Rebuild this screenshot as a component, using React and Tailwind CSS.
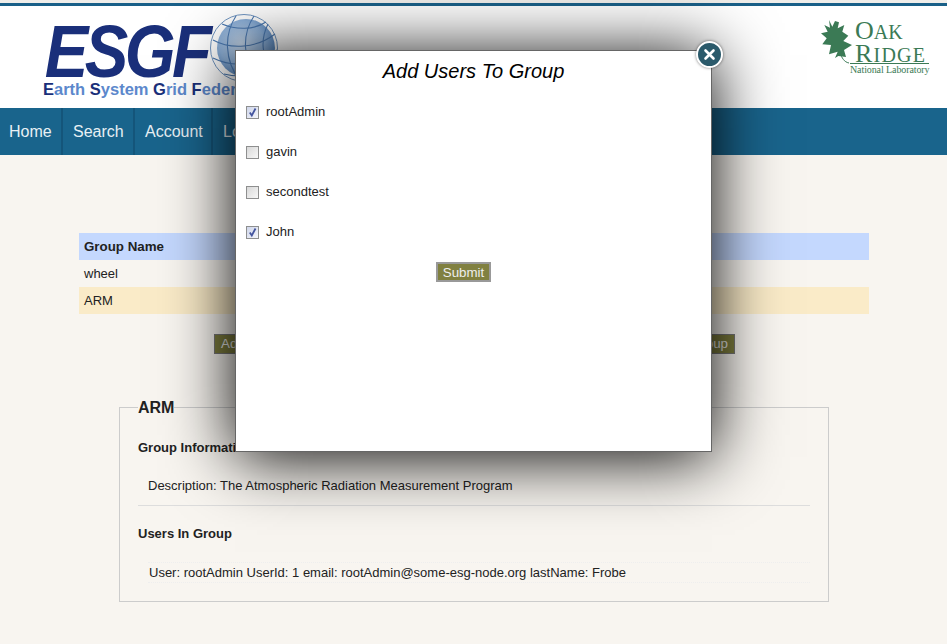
import React from 'react'

const NAV = [
  { label: 'Home', className: 'w-[63px] pl-[9px]' },
  { label: 'Search', className: 'w-[72px] pl-[10px]' },
  { label: 'Account', className: 'w-[78px] pl-[10px]' },
  { label: 'Logout', className: 'w-[78px] pl-[10px]' },
]

const USERS = [
  { name: 'rootAdmin', checked: true },
  { name: 'gavin', checked: false },
  { name: 'secondtest', checked: false },
  { name: 'John', checked: true },
]

function Globe() {
  return (
    <svg width="72" height="72" viewBox="0 0 72 72" className="absolute left-[208px] top-[6px]">
      <defs>
        <radialGradient id="globeFill" cx="0.42" cy="0.42" r="0.7">
          <stop offset="0" stopColor="#c4d6ea" />
          <stop offset="0.55" stopColor="#8fb2da" />
          <stop offset="1" stopColor="#3f74b4" />
        </radialGradient>
      </defs>
      <circle cx="38" cy="36" r="29" fill="url(#globeFill)" />
      <g fill="none" stroke="#4a78b0" strokeWidth="1.1">
        <circle cx="36" cy="36" r="33.5" strokeWidth="0.8" />
        <path d="M14 12c14 6 32 6 44-2M5 28c18 10 44 8 62-6M5 46c20 10 46 8 64-8M16 62c16 4 34 2 46-10" />
        <path d="M28 4C16 22 16 48 32 69M46 4C34 22 34 48 50 66M60 12c-8 16-6 34 4 44" />
      </g>
    </svg>
  )
}

function OakLeaf() {
  return (
    <svg width="34" height="50" viewBox="0 0 34 50" className="shrink-0">
      <path
        d="M9 0L12.3 6.7 15 1 19 2.3 17.7 8.3 24.3 5 22.3 11.7 28.3 15.7 23.3 21 32 25 24 30 26 37 18.3 36 15 38 17.7 31.7 9 34.3 11 25 2.3 24.3 6.7 18.3 1 13.3 7.7 11.7 4.3 5 10 7.7z"
        fill="#3b7a55"
      />
      <path d="M20 33c2 5 4 9 9 10" fill="none" stroke="#3b7a55" strokeWidth="1" />
    </svg>
  )
}

function Checkbox({ checked }) {
  return (
    <span className={`flex h-[13px] w-[13px] shrink-0 items-center justify-center border border-[#8e8f8f] bg-gradient-to-br ${checked ? 'from-[#cfd6ea] to-[#f4f5fa]' : 'from-[#d8d8d8] to-[#f8f8f8]'}`}>
      {checked && (
        <svg width="11" height="11" viewBox="0 0 11 11">
          <path d="M2.8 5.5l2 3L8.5 1.5" fill="none" stroke="#44559f" strokeWidth="1.8" />
        </svg>
      )}
    </span>
  )
}

function OliveButton({ children }) {
  return (
    <button className="h-5 border border-[#777] bg-[#7f7f3f] px-[6px] text-[13.33px] leading-[18px] text-[#eeeeee]">
      {children}
    </button>
  )
}

function Modal() {
  return (
    <div className="absolute left-[235px] top-[50px] h-[402px] w-[477px] border border-[#666] bg-white shadow-[0_5px_64px_#000]">
      <h2 className="pt-[5px] text-center text-[20px] italic leading-[30px] text-black">Add Users To Group</h2>
      <div className="mt-[6px] flex flex-col pl-[10px]">
        {USERS.map((u) => (
          <label key={u.name} className="flex h-10 items-center gap-[7px] text-[13px] text-[#222]">
            <Checkbox checked={u.checked} />
            {u.name}
          </label>
        ))}
      </div>
      <div className="mt-[10px] pl-[200px]">
        <button className="h-5 w-[55px] border-2 border-[#999] bg-[#808040] text-[13.33px] leading-[15px] text-[#eeeeee]">Submit</button>
      </div>
      <button className="absolute right-[-12px] top-[-10px] flex h-[27px] w-[27px] items-center justify-center rounded-full border-2 border-white bg-[#2b5a6b] shadow-[0_0_3px_#0008]">
        <svg width="13" height="13" viewBox="0 0 13 13">
          <path d="M2.5 2.5l8 8M10.5 2.5l-8 8" stroke="#fff" strokeWidth="2.6" strokeLinecap="round" />
        </svg>
      </button>
    </div>
  )
}

export default function App() {
  return (
    <div className="relative h-[644px] overflow-hidden bg-[#f8f5f0] font-['Liberation_Sans',Arial,sans-serif] text-[13px] text-[#222]">
      <div className="h-[3px] bg-[#f0eeea]" />
      <div className="h-[3px] bg-[#1a6088]" />

      <header className="relative flex h-[102px] justify-between bg-white">
        <Globe />
        <div className="relative pl-[43px]">
          <div className="h-[73px] origin-left scale-x-[0.87] whitespace-nowrap pl-[2px] pt-[9px] text-[75px] font-bold italic leading-[72px] tracking-[-4px] text-[#1a2f7a]">
            ESGF
          </div>
          <div className="whitespace-nowrap text-[16.5px] font-bold leading-[20px] text-[#5c88cc]">
            <span className="text-[#1a2f7a]">E</span>arth <span className="text-[#1a2f7a]">S</span>ystem{' '}
            <span className="text-[#1a2f7a]">G</span>rid <span className="text-[#1a2f7a]">F</span>ederation
          </div>
        </div>
        <div className="mr-[17px] mt-[14px] flex w-[110px] flex-col font-['Liberation_Serif',serif] text-[#3b7a55]">
          <div className="flex h-[43px]">
            <OakLeaf />
            <div className="ml-[1px] flex flex-col">
              <div className="whitespace-nowrap text-[20px] leading-[22px]">
                <span className="text-[26px]">O</span>AK
              </div>
              <div className="whitespace-nowrap text-[20px] leading-[22px] tracking-[1.2px]">
                <span className="text-[26px]">R</span>IDGE
              </div>
            </div>
          </div>
          <div className="ml-[30px] w-[79px] whitespace-nowrap border-t border-[#3b7a55] text-[10px] leading-[12px] tracking-[-0.1px]">
            National Laboratory
          </div>
        </div>
      </header>

      <nav className="flex h-[47px] bg-[#19648c] text-[16px] leading-[47px] text-[#e8f0f4]">
        {NAV.map((item) => (
          <a key={item.label} className={`border-r-2 border-[#14557a] ${item.className}`}>
            {item.label}
          </a>
        ))}
      </nav>

      <main className="flex flex-col pt-[78px]">
        <table className="mx-[79px] w-[790px] border-collapse">
          <tbody>
            <tr className="h-[27px] bg-[#c4d8fe]">
              <th className="pl-[5px] text-left text-[13.33px] font-bold">Group Name</th>
            </tr>
            <tr className="h-[27px]">
              <td className="pl-[5px]">wheel</td>
            </tr>
            <tr className="h-[27px] bg-[#faebc8]">
              <td className="pl-[5px]">ARM</td>
            </tr>
          </tbody>
        </table>

        <div className="ml-[214px] mt-[20px] flex w-[521px] justify-between">
          <OliveButton>Add Users To Group</OliveButton>
          <OliveButton>Delete Group</OliveButton>
        </div>

        <fieldset className="mx-[119px] mt-[42px] h-[206px] w-[710px] border border-[#ccc] px-[18px]">
          <legend className="pt-[2px] text-[16px] font-bold leading-[20px]">ARM</legend>
          <h3 className="mt-[20px] font-bold leading-[20px]">Group Information</h3>
          <p className="ml-[10px] mt-[18px] leading-[20px]">Description: The Atmospheric Radiation Measurement Program</p>
          <hr className="mt-[9px] w-[672px] border-[#ddd]" />
          <h3 className="mt-[18px] font-bold leading-[20px]">Users In Group</h3>
          <div className="ml-[10px] mt-[18px] h-[21px] w-[662px] border-y border-dotted border-[#eee] pl-[1px] leading-[19px]">
            User: rootAdmin UserId: 1 email: rootAdmin@some-esg-node.org lastName: Frobe
          </div>
        </fieldset>
      </main>

      <Modal />
    </div>
  )
}
